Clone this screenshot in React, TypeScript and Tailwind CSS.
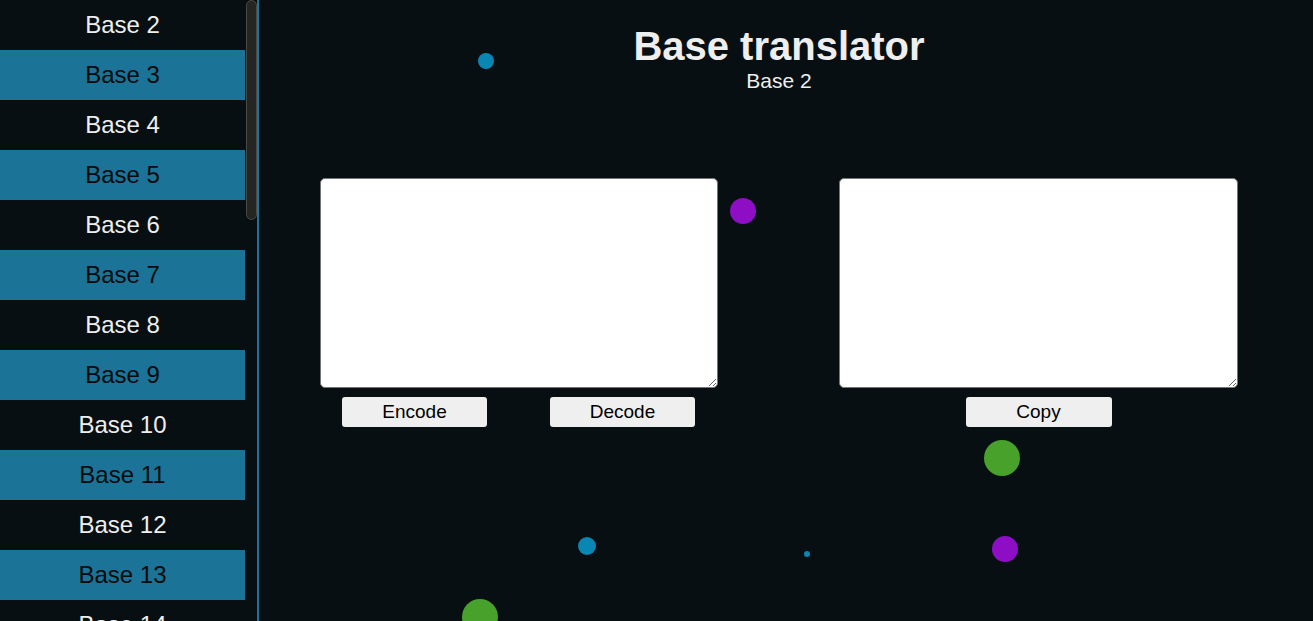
import React from "react";

const bases = Array.from({ length: 13 }, (_, i) => i + 2);

const dots = [
  { x: 486, y: 61, r: 8, color: "#0a86b4" },
  { x: 743, y: 211, r: 13, color: "#8e0ec6" },
  { x: 1002, y: 458, r: 18, color: "#47a12a" },
  { x: 587, y: 546, r: 9, color: "#0a86b4" },
  { x: 807, y: 554, r: 3, color: "#0a86b4" },
  { x: 1005, y: 549, r: 13, color: "#8e0ec6" },
  { x: 480, y: 617, r: 18, color: "#47a12a" },
];

export default function App() {
  return (
    <div
      className="flex h-[621px] w-full overflow-hidden bg-[#080f12] text-[#eeeeee]"
      style={{ fontFamily: '"Liberation Sans", Arial, sans-serif' }}
    >
      {/* Sidebar */}
      <aside className="flex h-full shrink-0 border-r-2 border-[#1b7497]">
        <ul className="w-[245px] overflow-hidden">
          {bases.map((b) => (
            <li
              key={b}
              className={`flex h-[50px] items-center justify-center text-[24px] ${
                b % 2 === 1 ? "bg-[#1b7497] text-[#050a0c]" : "text-[#eeeeee]"
              }`}
            >
              Base {b}
            </li>
          ))}
        </ul>
        <div className="w-3">
          <div className="mx-auto h-[220px] w-[11px] rounded-full border border-[#4a4a44] bg-[#252524]" />
        </div>
      </aside>

      {/* Main */}
      <main className="relative flex-1 pr-[14px]">
        {dots.map((d, i) => (
          <span
            key={i}
            className="absolute rounded-full"
            style={{
              left: d.x - 259 - d.r,
              top: d.y - d.r,
              width: d.r * 2,
              height: d.r * 2,
              background: d.color,
            }}
          />
        ))}

        <header className="pt-[23px] text-center">
          <h1 className="text-[40px] font-bold leading-[46px]">Base translator</h1>
          <p className="text-[21px] leading-[23px]">Base 2</p>
        </header>

        <div className="mt-[86px] flex justify-center gap-[121px]">
          <div className="w-[398px]">
            <textarea className="block h-[210px] w-full rounded-[5px] border border-[#767676] bg-white text-black" />
            <div className="mt-[9px] flex justify-between pl-[22px] pr-[23px]">
              <button className="h-[30px] w-[145px] rounded-[3px] bg-[#efefef] text-[19px] text-black">
                Encode
              </button>
              <button className="h-[30px] w-[145px] rounded-[3px] bg-[#efefef] text-[19px] text-black">
                Decode
              </button>
            </div>
          </div>
          <div className="w-[399px]">
            <textarea className="block h-[210px] w-full rounded-[5px] border border-[#767676] bg-white text-black" />
            <div className="mt-[9px] flex justify-center">
              <button className="h-[30px] w-[146px] rounded-[3px] bg-[#efefef] text-[19px] text-black">
                Copy
              </button>
            </div>
          </div>
        </div>
      </main>
    </div>
  );
}
